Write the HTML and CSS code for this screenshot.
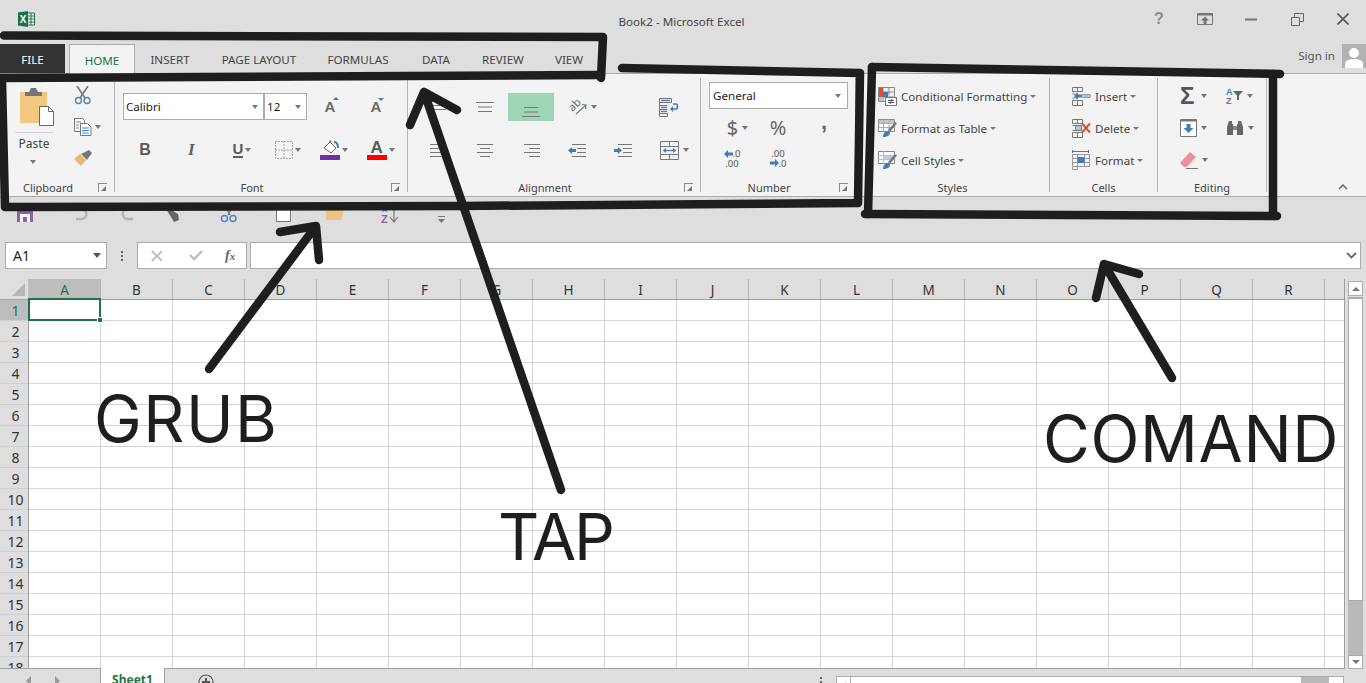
FILE: index.html
```html
<!DOCTYPE html>
<html lang="en">
<head>
    <meta charset="UTF-8">
    <meta name="viewport" content="width=device-width, initial-scale=1.0">
    <title>Book2 - Microsoft Excel</title>
    <link rel="stylesheet" href="styles.css">
</head>
<body>

    <!-- title bar -->
    <div class="titlebar">
        <div class="logo">
            <svg width="17" height="16" viewBox="0 0 17 16">
                <path d="M9 2h7.500v12H9z" fill="#fff" stroke="#1e7145"/>
                <path d="M10 5h6M10 8h6M10 11h6M13 2v12" stroke="#1e7145"/>
                <path d="M0 1.500 10 0v16L0 14.500z" fill="#1e7145"/>
                <text x="5" y="12" class="logo-x">X</text>
            </svg>
        </div>
        <div class="doc-title">Book2 - Microsoft Excel</div>
        <div class="win-controls">
            <div class="win-btn help">?</div>
            <div class="win-btn">
                <svg width="16" height="12" viewBox="0 0 16 12"><path d="M.5.500h15v11H.5z" fill="none" stroke="#777"/><path d="M.5 1.500h15" stroke="#777" stroke-width="2"/><path d="M8 3.500 12 7.500H9.500V11h-3V7.500H4z" fill="#777"/></svg>
            </div>
            <div class="win-btn">
                <svg width="12" height="3" viewBox="0 0 12 3"><path d="M0 1.500h12" stroke="#777" stroke-width="2"/></svg>
            </div>
            <div class="win-btn">
                <svg width="13" height="13" viewBox="0 0 13 13"><path d="M.5 4.500h8v8h-8zM3.500 4.500v-4h9v8h-4" fill="none" stroke="#666"/></svg>
            </div>
            <div class="win-btn">
                <svg width="12" height="12" viewBox="0 0 12 12"><path d="M.5.500l11 11M11.500.500l-11 11" stroke="#555" stroke-width="1.600"/></svg>
            </div>
        </div>
    </div>

    <!-- tabs -->
    <div class="tab-row">
        <div class="tabs">
            <div class="tab tab-file">FILE</div>
            <div class="tab tab-home"><span>HOME</span></div>
            <div class="tab">INSERT</div>
            <div class="tab">PAGE LAYOUT</div>
            <div class="tab">FORMULAS</div>
            <div class="tab">DATA</div>
            <div class="tab">REVIEW</div>
            <div class="tab">VIEW</div>
        </div>
        <div class="account">
            <span class="sign-in">Sign in</span>
            <div class="avatar">
                <svg width="24" height="24" viewBox="0 0 24 24"><circle cx="12" cy="9" r="5" fill="#fff"/><path d="M3 24v-4c0-4 5-5 9-5s9 1 9 5v4z" fill="#fff"/></svg>
            </div>
        </div>
    </div>

    <!-- ribbon -->
    <div class="ribbon">

        <div class="group group-clipboard">
            <div class="group-body clipboard-body">
                <div class="paste-col">
                    <svg width="34" height="38" viewBox="0 0 34 38">
                        <path d="M0 4h27v31H0z" fill="#f0c97f"/>
                        <path d="M5 8V4h4l2-4h5l2 4h4v4z" fill="#767676"/>
                        <path d="M19.500 18.500h9l5 5v14h-14z" fill="#fff" stroke="#6a6a6a"/>
                        <path d="M28.500 18.500v5h5" fill="none" stroke="#6a6a6a"/>
                    </svg>
                    <div class="paste-line"></div>
                    <div class="paste-label">Paste</div>
                    <span class="caret"></span>
                </div>
                <div class="clip-col">
                    <div class="clip-item">
                        <svg width="18" height="19" viewBox="0 0 18 19"><path d="M3 0l8 12M14 0L6 12" stroke="#777" stroke-width="1.600"/><circle cx="4.500" cy="14.500" r="3" fill="none" stroke="#4a86c5" stroke-width="1.400"/><circle cx="13" cy="14.500" r="3" fill="none" stroke="#4a86c5" stroke-width="1.400"/></svg>
                    </div>
                    <div class="clip-item">
                        <svg width="18" height="18" viewBox="0 0 18 18"><path d="M.5.500h8l2 2v11H.5z" fill="#fff" stroke="#777"/><path d="M6.500 5.500h7l3.500 3.500v8.500H6.500z" fill="#fff" stroke="#777"/><path d="M2 4h5M2 7h3M2 10h3M8 10h7M8 12.500h7M8 15h7" stroke="#4a86c5"/></svg>
                        <span class="caret caret-abs"></span>
                    </div>
                    <div class="clip-item">
                        <svg width="18" height="16" viewBox="0 0 18 16"><path d="M0 9l6-5 6 6-5 6z" fill="#e5b873"/><path d="M7 4l8-4 3 3-5 7z" fill="#777"/></svg>
                    </div>
                </div>
            </div>
            <div class="group-foot"><span class="group-name">Clipboard</span><span class="launcher"></span></div>
        </div>

        <div class="group group-font">
            <div class="group-body">
                <div class="font-row">
                    <div class="combo combo-font">Calibri<span class="caret"></span></div>
                    <div class="combo combo-size">12<span class="caret"></span></div>
                    <div class="size-btn"><span class="big-a">A</span><span class="mini-up"></span></div>
                    <div class="size-btn"><span class="big-a">A</span><span class="mini-down"></span></div>
                </div>
                <div class="font-tools">
                    <div class="tool fmt-b">B</div>
                    <div class="tool fmt-i">I</div>
                    <div class="tool"><span class="fmt-u">U</span><span class="caret"></span></div>
                    <div class="tool">
                        <svg width="18" height="18" viewBox="0 0 18 18"><path d="M.5.500h17v17H.5zM9 .500v17M.5 9h17" fill="none" stroke="#666" stroke-dasharray="1 2"/></svg>
                        <span class="caret"></span>
                    </div>
                    <div class="tool">
                        <svg width="20" height="21" viewBox="0 0 20 21"><path d="M4 8l6-6 6 6-5 5z" fill="#fff" stroke="#666"/><path d="M10 2c-1-2 1-2 1 0" fill="none" stroke="#666"/><path d="M14 2c3 0 4 3 4 6" fill="none" stroke="#3f7cbf" stroke-width="2"/><path d="M0 15h20v5H0z" fill="#7030a0"/></svg>
                        <span class="caret"></span>
                    </div>
                    <div class="tool">
                        <div class="color-a"><span>A</span><div class="color-bar"></div></div>
                        <span class="caret"></span>
                    </div>
                </div>
            </div>
            <div class="group-foot"><span class="group-name">Font</span><span class="launcher"></span></div>
        </div>

        <div class="group group-align">
            <div class="group-body">
                <div class="align-row">
                    <div class="slot"><svg class="ico" width="18" height="14" viewBox="0 0 18 14"><path d="M0 1.500h18M2 5.500h14M2 9.500h14" stroke="#777"/></svg></div>
                    <div class="slot"><svg class="ico" width="18" height="12" viewBox="0 0 18 12"><path d="M0 1.500h18M2 6h14M2 10.500h14" stroke="#777"/></svg></div>
                    <div class="slot slot-on"><svg class="ico down" width="18" height="12" viewBox="0 0 18 12"><path d="M2 1.500h14M2 6h14M0 10.500h18" stroke="#777"/></svg></div>
                    <div class="slot">
                        <svg class="orient" width="20" height="20" viewBox="0 0 20 20"><text x="1" y="12" class="ab" transform="rotate(-45 7 8)">ab</text><path d="M9 17 19 8M15 7.500l4 .500-.500 4" fill="none" stroke="#777" stroke-width="1.200"/></svg>
                        <span class="caret"></span>
                    </div>
                    <div class="slot"></div>
                    <div class="slot">
                        <svg width="20" height="19" viewBox="0 0 20 19"><path d="M.5.500h12v4H.5zM.5 7.500h8M.5 11.500h8M.5 15.500h8v3H.5zM.5 4.500v14" fill="none" stroke="#777"/><path d="M2 2.500h9M2 9.500h6M2 13.500h6" stroke="#4a86c5" stroke-width="1.400"/><path d="M14 6h3c2 0 2 5 0 5h-5" fill="none" stroke="#3f7cbf" stroke-width="1.600"/><path d="M14 8l-3 3 3 3z" fill="#3f7cbf"/></svg>
                    </div>
                </div>
                <div class="align-row align-row-two">
                    <div class="slot"><svg width="18" height="14" viewBox="0 0 18 14"><path d="M0 1.500h16M0 5.500h11M0 9.500h16M0 13.500h11" stroke="#777"/></svg></div>
                    <div class="slot"><svg width="18" height="14" viewBox="0 0 18 14"><path d="M1 1.500h16M4 5.500h10M1 9.500h16M4 13.500h10" stroke="#777"/></svg></div>
                    <div class="slot"><svg width="18" height="14" viewBox="0 0 18 14"><path d="M2 1.500h16M7 5.500h11M2 9.500h16M7 13.500h11" stroke="#777"/></svg></div>
                    <div class="slot"><svg width="18" height="14" viewBox="0 0 18 14"><path d="M4 1.500h14M9 5.500h9M9 9.500h9M4 13.500h14" stroke="#777"/><path d="M0 7.500 4 4v2h4v3H4v2z" fill="#3f7cbf"/></svg></div>
                    <div class="slot"><svg width="18" height="14" viewBox="0 0 18 14"><path d="M4 1.500h14M9 5.500h9M9 9.500h9M4 13.500h14" stroke="#777"/><path d="M8 7.500 4 4v2H0v3h4v2z" fill="#3f7cbf"/></svg></div>
                    <div class="slot">
                        <svg width="19" height="19" viewBox="0 0 19 19"><path d="M.5.500h18v18H.5zM.5 5.500h18M.5 13.500h18M9.500.500v5M9.500 13.500v5" fill="none" stroke="#777"/><path d="M3 9.500h13" stroke="#3f7cbf" stroke-width="1.200"/><path d="M6 7 3 9.500 6 12zM13 7l3 2.500-3 2.500z" fill="#3f7cbf"/></svg>
                        <span class="caret"></span>
                    </div>
                </div>
            </div>
            <div class="group-foot"><span class="group-name">Alignment</span><span class="launcher"></span></div>
        </div>

        <div class="group group-number">
            <div class="group-body">
                <div class="combo combo-general">General<span class="caret"></span></div>
                <div class="num-row num-row-symbols">
                    <div class="slot"><span class="sym">$</span><span class="caret"></span></div>
                    <div class="slot"><span class="sym">%</span></div>
                    <div class="slot"><span class="sym sym-comma">,</span></div>
                </div>
                <div class="num-row">
                    <div class="slot">
                        <div class="dec"><span class="dec-line"><svg width="9" height="8" viewBox="0 0 9 8"><path d="M0 4l4-4v2.500h5v3H4V8z" fill="#3f7cbf"/></svg>.0</span><span>.00</span></div>
                    </div>
                    <div class="slot">
                        <div class="dec"><span>.00</span><span class="dec-line"><svg width="9" height="8" viewBox="0 0 9 8"><path d="M9 4 5 0v2.500H0v3h5V8z" fill="#3f7cbf"/></svg>.0</span></div>
                    </div>
                </div>
            </div>
            <div class="group-foot"><span class="group-name">Number</span><span class="launcher"></span></div>
        </div>

        <div class="group group-styles">
            <div class="group-body list-body">
                <div class="list-item">
                    <svg width="19" height="19" viewBox="0 0 19 19"><path d="M.5.500h16v14H.5zM.5 5h16M.5 10h16M5 .500v14M11 .500v8" fill="none" stroke="#888"/><path d="M1 1h4v4H1z" fill="#e0512b"/><path d="M1 5h4v5H1z" fill="#e0512b"/><path d="M5 5h5v5H5z" fill="#3f7cbf"/><path d="M1 10h4v4H1z" fill="#a9c6e6"/><path d="M7.500 10.500h11v8h-11z" fill="#fff" stroke="#777"/><path d="M10 13.500h6M10 15.500h6M14 12l-2 5" stroke="#555"/></svg>
                    <span>Conditional Formatting</span><span class="caret"></span>
                </div>
                <div class="list-item">
                    <svg width="19" height="19" viewBox="0 0 19 19"><path d="M.5.500h16v12H.5z" fill="#fff" stroke="#888"/><path d="M1 1h15v3H1z" fill="#c5c5c5"/><path d="M.5 4.500h16M.5 8.500h16M5.500.500v12M11 .500v12" stroke="#aaa"/><path d="M10 11 17 3l2 1.500-7 8.500z" fill="#777"/><path d="M5 18c0-3 2-6 5-6l2 1.500c0 3-3 4.500-7 4.500z" fill="#3f7cbf"/></svg>
                    <span>Format as Table</span><span class="caret"></span>
                </div>
                <div class="list-item">
                    <svg width="19" height="19" viewBox="0 0 19 19"><path d="M.5.500h16v12H.5z" fill="#fff" stroke="#888"/><path d="M.5 4.500h16M.5 8.500h16M5.500.500v12" stroke="#bbb"/><path d="M5.500 4.500h10v4h-10z" fill="#b8cde4"/><path d="M10 11 17 3l2 1.500-7 8.500z" fill="#777"/><path d="M5 18c0-3 2-6 5-6l2 1.500c0 3-3 4.500-7 4.500z" fill="#3f7cbf"/></svg>
                    <span>Cell Styles</span><span class="caret"></span>
                </div>
            </div>
            <div class="group-foot group-foot-plain"><span class="group-name">Styles</span></div>
        </div>

        <div class="group group-cells">
            <div class="group-body list-body">
                <div class="list-item">
                    <svg width="19" height="19" viewBox="0 0 19 19"><path d="M.5.500h10v4H.5zM5.500.500v4M.5 13.500h10v5H.5zM5.500 13.500v5M.5 7h5v4h-5M11 7.500h7v3h-7z" fill="none" stroke="#777"/><path d="M11 7.500h7v3h-7z" fill="#a9c6e6"/><path d="M2 9 6 5.500v2h4v3H6v2z" fill="#3f7cbf"/></svg>
                    <span>Insert</span><span class="caret"></span>
                </div>
                <div class="list-item">
                    <svg width="19" height="19" viewBox="0 0 19 19"><path d="M.5.500h10v4H.5zM5.500.500v4M.5 13.500h10v5H.5zM5.500 13.500v5M.5 6.500h3M.5 11.500h3" fill="none" stroke="#777"/><path d="M3.500 6.500h6v5h-6z" fill="#a9c6e6" stroke="#777"/><path d="M10 4.500l8 9M18 4.500l-8 9" stroke="#d9512c" stroke-width="2"/></svg>
                    <span>Delete</span><span class="caret"></span>
                </div>
                <div class="list-item">
                    <svg width="19" height="20" viewBox="0 0 19 20"><path d="M.5 1.500h16M.5 0v3M16.500 0v3" stroke="#3f7cbf"/><path d="M.5 4.500h17v12H.5zM.5 8.500h17M.5 12.500h17M5.500 4.500v15M12.500 4.500v12M.5 16.500v3h5" fill="none" stroke="#999"/><path d="M5.500 7h7v6h-7z" fill="#3f7cbf"/></svg>
                    <span>Format</span><span class="caret"></span>
                </div>
            </div>
            <div class="group-foot group-foot-plain"><span class="group-name">Cells</span></div>
        </div>

        <div class="group group-editing">
            <div class="group-body editing-body">
                <div class="edit-tool"><span class="sigma">&Sigma;</span><span class="caret"></span></div>
                <div class="edit-tool">
                    <svg width="17" height="17" viewBox="0 0 17 17"><text x="0" y="7" class="az-a">A</text><text x="0" y="16" class="az-z">Z</text><path d="M7 3h10l-4 4.500V12h-2V7.500z" fill="#666"/></svg>
                    <span class="caret"></span>
                </div>
                <div class="edit-tool">
                    <svg width="17" height="18" viewBox="0 0 17 18"><path d="M.5.500h16v17H.5z" fill="#fff" stroke="#777"/><path d="M.5 1.500h16" stroke="#777" stroke-width="2"/><path d="M8.500 14 3.500 9h3V5h4v4h3z" fill="#3f7cbf"/></svg>
                    <span class="caret"></span>
                </div>
                <div class="edit-tool">
                    <svg width="18" height="16" viewBox="0 0 18 16"><path d="M3 1h3v3h1v11H1V7zM15 1h-3v3h-1v11h6V7z" fill="#666"/><path d="M7 6h4v4H7z" fill="#888"/></svg>
                    <span class="caret"></span>
                </div>
                <div class="edit-tool">
                    <svg width="18" height="17" viewBox="0 0 18 17"><path d="M0 11 10 0l6 5-9 10H4z" fill="#ec8f9c"/><path d="M6 16.500h12" stroke="#777"/></svg>
                    <span class="caret"></span>
                </div>
            </div>
            <div class="group-foot group-foot-plain"><span class="group-name">Editing</span></div>
        </div>

        <div class="ribbon-end">
            <svg width="10" height="6" viewBox="0 0 10 6"><path d="M1 5l4-4 4 4" fill="none" stroke="#666" stroke-width="1.500"/></svg>
        </div>
    </div>

    <!-- quick access -->
    <div class="qat">
        <div class="qat-item">
            <svg width="16" height="16" viewBox="0 0 16 16"><path d="M0 0h16v16H0z" fill="#8f5fb0"/><path d="M3 8h10v8h-3v-5H6v5H3z" fill="#fff"/></svg>
        </div>
        <div class="qat-item">
            <svg width="18" height="16" viewBox="0 0 18 16"><path d="M2 3h9c7 0 7 10 0 10H6" fill="none" stroke="#b5b5b5" stroke-width="2.500"/></svg>
        </div>
        <div class="qat-item">
            <svg width="18" height="16" viewBox="0 0 18 16"><path d="M16 3H7c-7 0-7 10 0 10h5" fill="none" stroke="#b5b5b5" stroke-width="2.500"/></svg>
        </div>
        <div class="qat-item">
            <svg width="22" height="16" viewBox="0 0 22 16"><path d="M1 3l7 2 5 3 1 6-5 2-3-5z" fill="#666"/><path d="M16 2h6l-3 3z" fill="#666"/></svg>
        </div>
        <div class="qat-item">
            <svg width="18" height="17" viewBox="0 0 18 17"><path d="M5 0l5 9M13 0L8 9" stroke="#777" stroke-width="1.500"/><circle cx="4.500" cy="12.500" r="3" fill="none" stroke="#4a86c5" stroke-width="1.400"/><circle cx="13" cy="12.500" r="3" fill="none" stroke="#4a86c5" stroke-width="1.400"/></svg>
        </div>
        <div class="qat-item">
            <svg width="15" height="16" viewBox="0 0 15 16"><path d="M.5.500h14v15H.5z" fill="#fff" stroke="#777"/></svg>
        </div>
        <div class="qat-item">
            <svg width="18" height="14" viewBox="0 0 18 14"><path d="M1 0h13v4H1z" fill="#fff" stroke="#e5b873"/><path d="M4 4h14l-3 10H0V5z" fill="#eec27f"/></svg>
        </div>
        <div class="qat-item">
            <svg class="qat-sort" width="18" height="18" viewBox="0 0 18 18"><text x="1" y="6" class="qat-a">A</text><text x="0" y="17" class="qat-z">Z</text><path d="M13 0v15M9 11l4 5 4-5" fill="none" stroke="#777" stroke-width="1.200"/></svg>
        </div>
        <div class="qat-item qat-more">
            <svg width="9" height="9" viewBox="0 0 9 9"><path d="M1 1.500h7" stroke="#777"/><path d="M1 4h7L4.500 8z" fill="#777"/></svg>
        </div>
    </div>

    <!-- formula bar -->
    <div class="formula-bar">
        <div class="name-box">A1<span class="caret caret-dark"></span></div>
        <div class="grip"><i></i><i></i><i></i></div>
        <div class="fx-box">
            <svg width="12" height="12" viewBox="0 0 12 12"><path d="M1 1l10 10M11 1 1 11" stroke="#bdbdbd" stroke-width="1.800"/></svg>
            <svg width="14" height="11" viewBox="0 0 14 11"><path d="M1 5l4 4 8-8" fill="none" stroke="#bdbdbd" stroke-width="2.400"/></svg>
            <span class="fx">f<span class="fx-x">x</span></span>
        </div>
        <div class="formula-input">
            <svg width="11" height="7" viewBox="0 0 11 7"><path d="M1 1l4.500 4.500L10 1" fill="none" stroke="#666" stroke-width="1.800"/></svg>
        </div>
    </div>

    <!-- sheet -->
    <div class="sheet">
        <div class="grid">
            <div class="corner"><span class="corner-mark"></span></div>
            <div class="col-heads">
                <div class="col-head col-on">A</div>
                <div class="col-head">B</div>
                <div class="col-head">C</div>
                <div class="col-head">D</div>
                <div class="col-head">E</div>
                <div class="col-head">F</div>
                <div class="col-head">G</div>
                <div class="col-head">H</div>
                <div class="col-head">I</div>
                <div class="col-head">J</div>
                <div class="col-head">K</div>
                <div class="col-head">L</div>
                <div class="col-head">M</div>
                <div class="col-head">N</div>
                <div class="col-head">O</div>
                <div class="col-head">P</div>
                <div class="col-head">Q</div>
                <div class="col-head">R</div>
            </div>
            <div class="row-heads">
                <div class="row-head row-on">1</div>
                <div class="row-head">2</div>
                <div class="row-head">3</div>
                <div class="row-head">4</div>
                <div class="row-head">5</div>
                <div class="row-head">6</div>
                <div class="row-head">7</div>
                <div class="row-head">8</div>
                <div class="row-head">9</div>
                <div class="row-head">10</div>
                <div class="row-head">11</div>
                <div class="row-head">12</div>
                <div class="row-head">13</div>
                <div class="row-head">14</div>
                <div class="row-head">15</div>
                <div class="row-head">16</div>
                <div class="row-head">17</div>
                <div class="row-head">18</div>
            </div>
            <div class="cells">
                <div class="active-cell"><span class="fill-handle"></span></div>
            </div>
        </div>
        <div class="vscroll">
            <div class="v-btn"><span class="tri-up"></span></div>
            <div class="v-thumb"></div>
            <div class="v-track"></div>
            <div class="v-btn v-btn-down"><span class="tri-down"></span></div>
        </div>
    </div>

    <!-- sheet tabs -->
    <div class="sheet-bar">
        <div class="sheet-nav"><span class="tri-left"></span><span class="tri-right"></span></div>
        <div class="sheet-tab">Sheet1</div>
        <div class="sheet-add">
            <svg width="16" height="16" viewBox="0 0 16 16"><circle cx="8" cy="8" r="7" fill="none" stroke="#555" stroke-width="1.200"/><path d="M8 4v8M4 8h8" stroke="#555" stroke-width="2"/></svg>
        </div>
        <div class="sheet-grip"><i></i><i></i></div>
        <div class="hscroll">
            <div class="h-btn"><span class="tri-left"></span></div>
            <div class="h-space"></div>
            <div class="h-thumb"></div>
            <div class="h-btn"><span class="tri-right"></span></div>
        </div>
    </div>

    <!-- hand drawn notes on top of the screenshot -->
    <svg class="ink" width="1366" height="683" viewBox="0 0 1366 683">
        <path d="M4 35.500 603 37 601 78" />
        <path d="M0 78 601 75" />
        <path d="M2 80 5 207 460 206 858 203 860 73 622 68" />
        <path d="M872 67 868 214" />
        <path d="M872 67 1280 74" />
        <path d="M1273 74 1273 215" />
        <path d="M865 214 1277 216" />
        <path d="M209 369 316 226M280 232 316 226 319 260" />
        <path d="M561 490 424 92M410 125 424 92 457 110" />
        <path d="M1172 378 1104 264M1096 298 1104 264 1139 274" />
    </svg>
    <div class="note note-grub">GRUB</div>
    <div class="note note-tap">TAP</div>
    <div class="note note-comand">COMAND</div>

</body>
</html>
```

FILE: styles.css
```css
* { box-sizing: border-box; }
html, body { margin: 0; padding: 0; }
body { position: relative; width: 1366px; height: 683px; overflow: hidden; background: #dedede; font-family: "Noto Sans", "Open Sans", sans-serif; font-size: 11.600px; color: #444; }
svg { display: block; flex: none; }

/* title bar */
.titlebar { display: flex; height: 44px; }
.logo { width: 300px; padding: 11px 0 0 18px; }
.logo-x { font: bold 10px "Liberation Sans", sans-serif; fill: #fff; text-anchor: middle; }
.doc-title { flex: 1; text-align: center; padding: 14px 73px 0 0; color: #444; }
.win-controls { display: grid; grid-template-columns: repeat(5, 46px); height: 38px; }
.win-btn { display: flex; align-items: center; justify-content: center; }
.help { font: bold 16px "Liberation Sans", sans-serif; color: #8c8c8c; }

/* tabs */
.tab-row { display: flex; height: 29px; }
.tabs { display: grid; grid-template-columns: 65px 70px 70px 108px 90px 66px 68px 64px; }
.tab { display: flex; align-items: center; justify-content: center; color: #444; height: 29px; padding-top: 1px; }
.tab-file { background: #333; color: #fff; }
.tab-home { position: relative; z-index: 1; height: 30px; margin-left: 4px; background: #f3f3f3; border: 1px solid #ababab; border-bottom: none; color: #217346; }
.account { display: flex; margin-left: auto; }
.sign-in { padding: 4px 7px 0 0; color: #555; }
.avatar { width: 24px; height: 24px; background: #b1b1b1; }

/* ribbon */
.ribbon { display: flex; height: 124px; padding: 4px 0 5px; background: #f3f3f3; border-top: 1px solid #ababab; border-bottom: 1px solid #ababab; }
.group { display: flex; flex-direction: column; height: 114px; border-right: 1px solid #b5b5b5; }
.group-body { flex: 1; min-height: 0; }
.group-foot { display: flex; height: 18px; padding-top: 5px; }
.group-name { flex: 1; text-align: center; font-size: 11px; line-height: 17px; height: 17px; color: #444; }
.launcher { position: relative; width: 18px; }
.launcher::before { content: ""; position: absolute; left: 2px; top: 4px; width: 8px; height: 8px; border-left: 1px solid #8a8a8a; border-top: 1px solid #8a8a8a; }
.launcher::after { content: ""; position: absolute; left: 5px; top: 7px; width: 5px; height: 5px; background: #777; clip-path: polygon(100% 0, 100% 100%, 0 100%); }
.caret { display: inline-block; flex: none; width: 0; height: 0; border-left: 3.500px solid transparent; border-right: 3.500px solid transparent; border-top: 4px solid #777; }
.caret-dark { border-left-width: 4px; border-right-width: 4px; border-top-width: 5px; border-top-color: #555; }

.group-clipboard { width: 115px; }
.clipboard-body { display: flex; }
.paste-col { width: 68px; padding: 10px 0 0 20px; display: flex; flex-direction: column; }
.paste-line { width: 38px; margin: 6px 0 0 -5px; border-top: 1px solid #d6d6d6; }
.paste-label { width: 38px; margin-left: -5px; text-align: center; line-height: 18px; margin-top: 2px; font-size: 12px; }
.paste-col .caret { margin: 7px 0 0 10px; }
.clip-col { display: flex; flex-direction: column; padding-top: 2px; }
.clip-item { position: relative; display: flex; align-items: center; height: 32px; padding-left: 6px; }
.caret-abs { margin-left: 3px; }

.group-font { width: 293px; }
.font-row { display: flex; padding: 15px 0 0 8px; height: 42px; }
.combo { display: flex; align-items: center; justify-content: space-between; height: 27px; background: #fff; border: 1px solid #ababab; padding: 0 5px 0 2px; color: #222; }
.combo-font { width: 141px; }
.combo-size { width: 43px; }
.size-btn { position: relative; width: 46px; display: flex; align-items: center; justify-content: center; }
.big-a { font: bold 15px "Liberation Sans", sans-serif; color: #6a6a6a; }
.mini-up { position: absolute; left: 26px; top: 4px; border-left: 3px solid transparent; border-right: 3px solid transparent; border-bottom: 3px solid #3f7cbf; }
.mini-down { position: absolute; left: 25px; top: 5px; border-left: 3px solid transparent; border-right: 3px solid transparent; border-top: 3px solid #3f7cbf; }
.font-tools { display: grid; grid-template-columns: repeat(6, 46.200px); padding: 16px 0 0 7px; height: 44px; }
.tool { display: flex; align-items: center; justify-content: center; gap: 2px; height: 28px; }
.tool .caret { margin-right: -9px; }
.fmt-b { font: bold 16px "Liberation Sans", sans-serif; color: #5c5c5c; }
.fmt-i { font: italic bold 17px "Liberation Serif", serif; color: #5c5c5c; }
.fmt-u { font: bold 15px "Liberation Sans", sans-serif; color: #5c5c5c; border-bottom: 2px solid #5c5c5c; line-height: 14px; }
.color-a { display: flex; flex-direction: column; align-items: center; }
.color-a span { font: bold 17px/15px "Liberation Sans", sans-serif; color: #5c5c5c; }
.color-bar { width: 20px; height: 5px; background: #f00; }

.group-align { width: 293px; }
.group-align .group-body { padding-left: 8px; }
.align-row { display: grid; grid-template-columns: repeat(6, 46px); padding-top: 15px; }
.slot { display: flex; align-items: center; justify-content: center; gap: 4px; height: 28px; }
.slot .caret { margin-right: -11px; }
.slot-on { background: #9fd5b7; }
.ico.down { margin-top: 9px; }
.orient { overflow: visible; margin-left: -2px; }
.ab { font: 11px "Noto Sans", sans-serif; fill: #666; }

.group-number { width: 155px; }
.group-number .group-body { padding: 4px 0 0 8px; }
.combo-general { width: 139px; padding: 0 6px 0 3px; }
.num-row { display: grid; grid-template-columns: repeat(3, 46px); height: 31px; }
.num-row .slot { height: 31px; }
.num-row-symbols { margin-top: 3px; }
.sym { font: 20px/26px "Noto Sans", sans-serif; color: #666; }
.sym-comma { font: bold 22px/14px "Liberation Sans", sans-serif; margin-top: -11px; }
.dec { display: flex; flex-direction: column; align-items: center; font: 9.500px/9.500px "Noto Sans", sans-serif; color: #555; }
.dec-line { display: flex; align-items: center; }

.group-styles { width: 194px; }
.list-body { padding: 2px 0 0 22px; }
.list-item { display: flex; align-items: center; height: 32px; gap: 4px; color: #444; }
.list-item .caret { margin-left: -1px; border-left-width: 3px; border-right-width: 3px; border-top-width: 3px; }
.group-cells { width: 108px; }

.group-editing { width: 109px; }
.editing-body { display: grid; grid-template-columns: 46px 46px; grid-auto-rows: 32px; padding: 2px 0 0 22px; }
.edit-tool { display: flex; align-items: center; gap: 4px; }
.sigma { font: bold 24px/24px "Liberation Sans", sans-serif; color: #555; width: 17px; }
.az-a { font: bold 9px "Liberation Sans", sans-serif; fill: #3f7cbf; }
.az-z { font: bold 9px "Liberation Sans", sans-serif; fill: #8f5fb0; }
.ribbon-end { flex: 1; display: flex; align-items: flex-end; justify-content: flex-end; padding: 0 18px 1px 0; }

/* quick access */
.qat { display: grid; grid-template-columns: 50px 58px 44px 48px 58px 50px 54px 56px 46px; width: 464px; height: 45px; padding-top: 9px; }
.qat-item { display: flex; justify-content: center; height: 18px; }
.qat-more { align-items: flex-end; }
.qat-sort { overflow: visible; }
.qat-a { font: bold 7px "Liberation Sans", sans-serif; fill: #3f7cbf; }
.qat-z { font: bold 11px "Liberation Sans", sans-serif; fill: #8f5fb0; }

/* formula bar */
.formula-bar { display: flex; height: 27px; margin: 0 5px 10px; }
.name-box { display: flex; align-items: center; justify-content: space-between; width: 102px; background: #fff; border: 1px solid #ababab; padding: 0 5px 0 7px; font-size: 14px; color: #222; }
.grip { display: flex; flex-direction: column; justify-content: center; gap: 2px; width: 30px; align-items: center; }
.grip i { width: 2px; height: 2px; background: #666; }
.fx-box { display: flex; align-items: center; gap: 26px; width: 110px; background: #fff; border: 1px solid #ababab; padding-left: 13px; }
.fx { font: italic bold 14px "Liberation Serif", serif; color: #666; margin-left: -4px; }
.fx-x { font-size: 11px; }
.formula-input { display: flex; align-items: center; justify-content: flex-end; flex: 1; margin-left: 3px; background: #fff; border: 1px solid #ababab; padding-right: 3px; }

/* sheet */
.sheet { display: flex; height: 390px; }
.grid { display: grid; grid-template-columns: 29px 1fr; grid-template-rows: 21px 1fr; width: 1345px; height: 390px; border-right: 1px solid #9f9f9f; border-bottom: 1px solid #9f9f9f; }
.corner { display: flex; justify-content: flex-end; align-items: flex-end; padding: 0 3px 3px 0; border-bottom: 1px solid #9f9f9f; border-right: 1px solid #c4c4c4; }
.corner-mark { width: 13px; height: 13px; background: #b7b7b7; clip-path: polygon(100% 0, 100% 100%, 0 100%); }
.col-heads { display: flex; border-bottom: 1px solid #9f9f9f; overflow: hidden; }
.col-head { display: flex; align-items: center; justify-content: center; flex: none; width: 72px; padding-top: 1px; border-right: 1px solid #b5b5b5; font-size: 13.500px; color: #333; }
.col-on { background: #bdbdbd; color: #217346; }
.row-heads { display: flex; flex-direction: column; border-right: 1px solid #9f9f9f; overflow: hidden; }
.row-head { flex: none; height: 21px; line-height: 21px; padding-left: 3px; text-align: center; font-size: 14px; color: #333; border-bottom: 1px solid #cfcfcf; }
.row-on { background: #bdbdbd; color: #217346; }
.cells { position: relative; background-color: #fff; background-image: linear-gradient(to right, transparent 71px, #d4d4d4 71px), linear-gradient(to bottom, transparent 20px, #d4d4d4 20px); background-size: 72px 21px; }
.active-cell { position: absolute; left: -1px; top: -2px; width: 73px; height: 23px; border: 2px solid #217346; }
.fill-handle { position: absolute; right: -4px; bottom: -4px; box-sizing: content-box; width: 4px; height: 4px; background: #217346; border: 1px solid #fff; }

.vscroll { display: flex; flex-direction: column; width: 21px; padding: 2px 3px 0; }
.v-btn { display: flex; align-items: center; justify-content: center; flex: none; height: 15px; background: #fff; border: 1px solid #ababab; }
.v-thumb { height: 304px; margin-top: 1px; background: #fff; border: 1px solid #ababab; border-top: 2px solid #ababab; }
.v-track { flex: 1; background: #b9b9b9; }
.v-btn-down { height: 14px; }
.tri-up { border-left: 4px solid transparent; border-right: 4px solid transparent; border-bottom: 4px solid #777; }
.tri-down { border-left: 4px solid transparent; border-right: 4px solid transparent; border-top: 4px solid #777; }
.tri-left { display: inline-block; border-top: 5px solid transparent; border-bottom: 5px solid transparent; border-right: 5px solid #9c9c9c; }
.tri-right { display: inline-block; border-top: 5px solid transparent; border-bottom: 5px solid transparent; border-left: 5px solid #9c9c9c; }

/* sheet tabs */
.sheet-bar { position: relative; display: flex; height: 14px; }
.sheet-nav { display: flex; gap: 24px; width: 100px; padding: 7px 0 0 26px; }
.sheet-tab { width: 65px; height: 16px; margin-top: -1px; background: #fff; border-right: 1px solid #9f9f9f; border-left: 1px solid #9f9f9f; text-align: center; font-size: 12px; font-weight: bold; color: #217346; line-height: 18px; padding-top: 3px; }
.sheet-add { width: 83px; padding: 5px 0 0 33px; }
.sheet-grip { display: flex; flex-direction: column; gap: 2px; width: 588px; padding: 8px 0 0 572px; }
.sheet-grip i { width: 2px; height: 2px; background: #666; }
.hscroll { display: flex; width: 508px; height: 10px; margin-top: 7px; background: #fff; border-top: 1px solid #ababab; border-left: 1px solid #ababab; border-right: 1px solid #ababab; }
.h-btn { width: 14px; padding: 3px 0 0 4px; background: #fff; }
.h-btn:first-child { border-right: 1px solid #ababab; }
.h-space { flex: 1; }
.h-thumb { width: 28px; background: #b9b9b9; }

/* hand drawn notes */
.ink { position: absolute; left: 0; top: 0; z-index: 2; pointer-events: none; }
.ink path { fill: none; stroke: #1e1e1e; stroke-width: 8.500; stroke-linecap: round; stroke-linejoin: round; }
.note { position: absolute; z-index: 3; font-family: Inter, sans-serif; font-size: 64px; line-height: 64px; color: #1e1e1e; white-space: nowrap; }
.note-grub { left: 94px; top: 387px; letter-spacing: 1.500px; }
.note-tap { left: 498px; top: 505px; letter-spacing: -2px; }
.note-comand { left: 1043px; top: 407px; letter-spacing: .700px; }
```
